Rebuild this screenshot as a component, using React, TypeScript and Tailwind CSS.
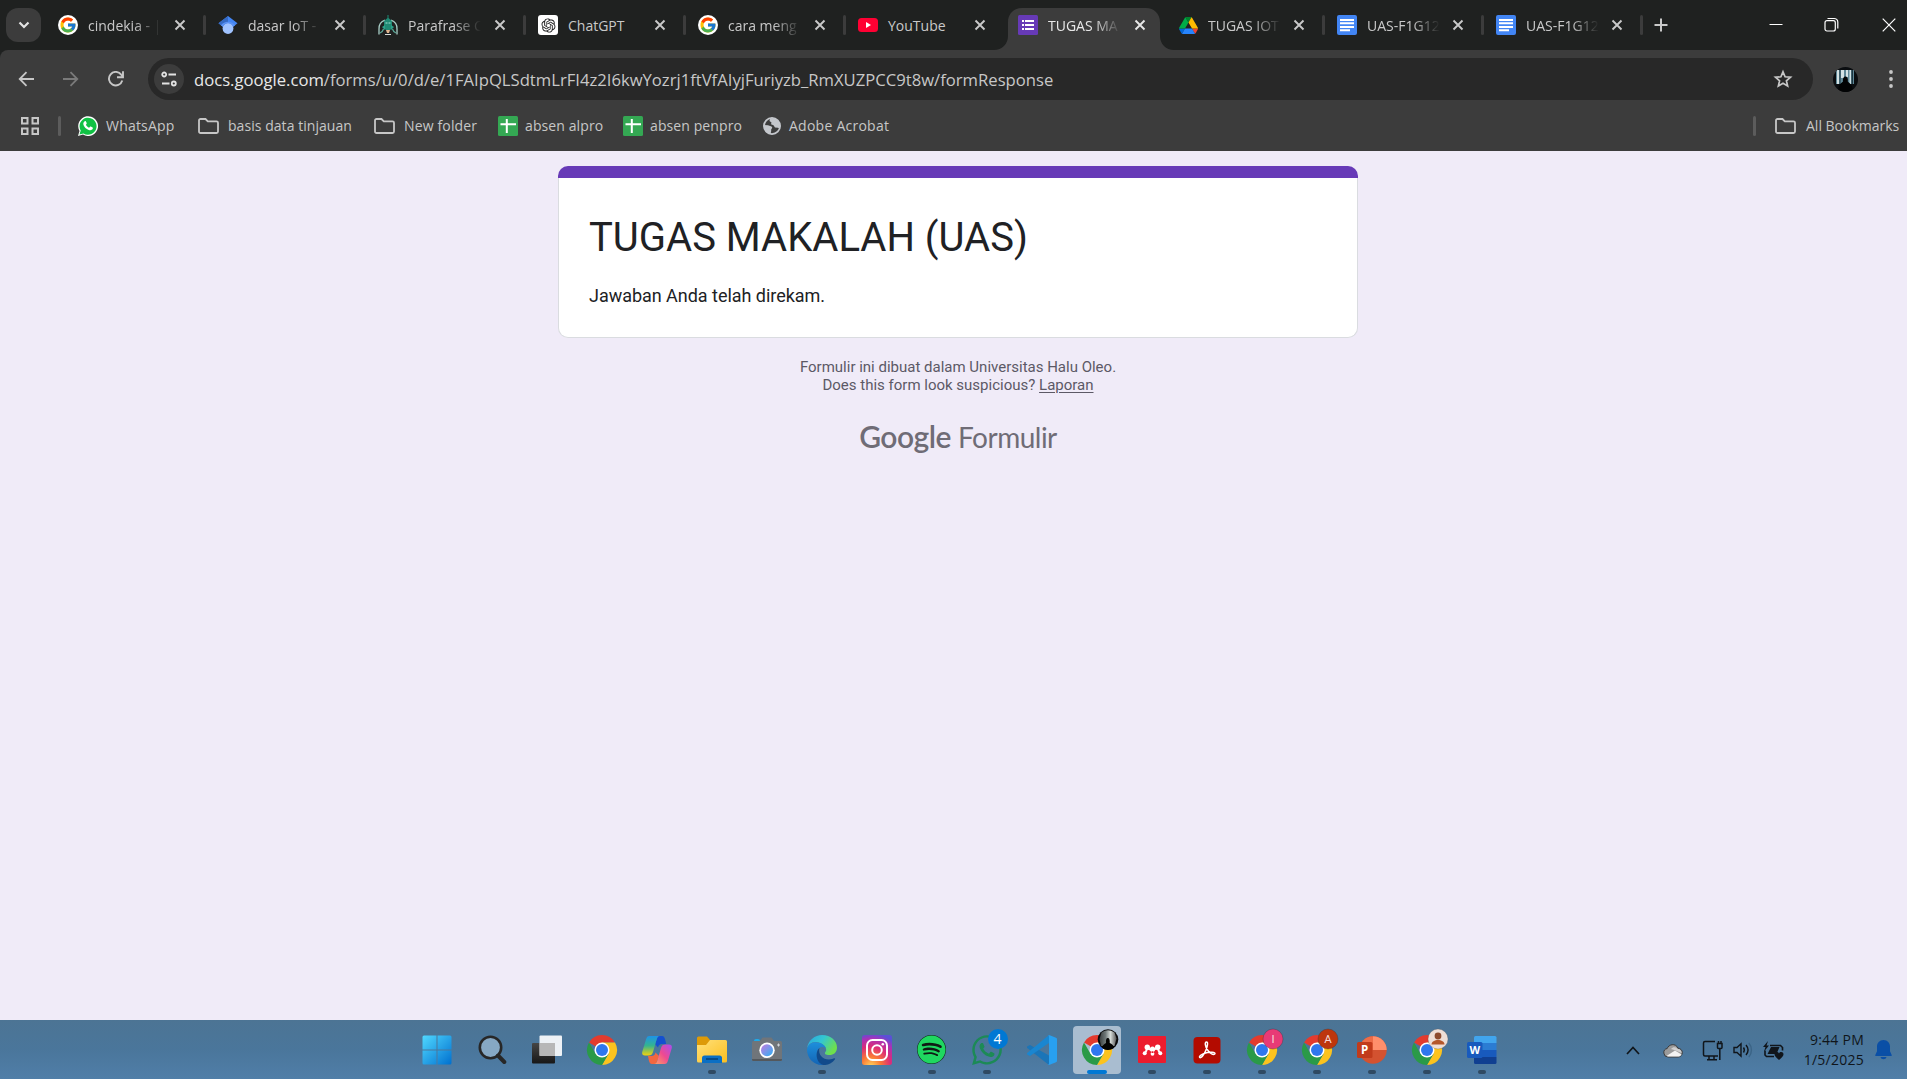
import React from "react";
import { FcGoogle } from "react-icons/fc";
import { RiOpenaiFill } from "react-icons/ri";
import { FaWhatsapp } from "react-icons/fa";
import { FaSpotify } from "react-icons/fa6";

const ui = "font-['Open_Sans','Noto_Sans',sans-serif]";

/* ---------- favicons ---------- */

const GoogleFav = () => (
  <span className="flex h-5 w-5 items-center justify-center rounded-full bg-white">
    <FcGoogle className="h-[18px] w-[18px]" />
  </span>
);

const ScholarFav = () => (
  <svg viewBox="0 0 20 20" className="h-5 w-5">
    <path d="M10 1 .5 8.200 4.500 11.500h11l4-3.300z" fill="#4285f4" />
    <path d="M10 1 .5 8.200 4.500 11.500 10 8z" fill="#356ac3" />
    <circle cx="10" cy="13.500" r="5.400" fill="#a0c3ff" />
    <path d="M4.600 11.800c2-4.600 8.800-4.600 10.800 0l1.600-1.600C14 5.500 6 5.500 3 10.200z" fill="#5b93f5" />
  </svg>
);

const ParafraseFav = () => (
  <svg viewBox="0 0 20 20" className="h-5 w-5" fill="none">
    <path d="M1 19.500V14A9 9 0 0 1 7 5.200M19 19.500V14A9 9 0 0 0 13 5.200" stroke="#a9cfc7" strokeWidth="1.300" />
    <path d="M2 18c2-1 3-2 3.500-4M18 18c-2-1-3-2-3.500-4" stroke="#5ba797" strokeWidth="1.200" />
    <path d="M6 6 9.500 3V0h1v3L14 6v6c0 2-2 3.500-4 3.500S6 14 6 12z" fill="#1f8a74" />
    <path d="M4 12l3-2v5zM16 12l-3-2v5z" fill="#2ba18a" />
    <path d="M7.500 8h2M10.500 8h2" stroke="#a6e3d5" />
    <path d="M8 15h4l-1 3H9z" fill="#e0b48e" />
    <path d="M7 19.500h6" stroke="#d4dcda" />
  </svg>
);

const ChatGptFav = () => (
  <span className="flex h-5 w-5 items-center justify-center rounded-[3px] bg-white">
    <RiOpenaiFill className="h-[17px] w-[17px] text-[#222]" />
  </span>
);

const YouTubeFav = () => (
  <svg viewBox="0 0 20 20" className="h-5 w-5">
    <rect y="3" width="20" height="14" rx="3.500" fill="#ff0033" />
    <path d="M8 7v6l5-3z" fill="#fff" />
  </svg>
);

const FormsFav = () => (
  <svg viewBox="0 0 20 20" className="h-5 w-5">
    <rect width="20" height="20" rx="1.500" fill="#673ab7" />
    <path d="M4 5h2v2H4zM7 5h9v2H7zM4 9h2v2H4zM7 9h9v2H7zM4 13h2v2H4zM7 13h9v2H7z" fill="#fff" />
  </svg>
);

const DriveFav = () => (
  <svg viewBox="0 0 87.300 78" className="h-[17px] w-[19px]">
    <path d="M6.600 66.850l3.850 6.650c.8 1.400 1.950 2.500 3.300 3.300L27.500 53H0c0 1.550.4 3.100 1.200 4.500z" fill="#0066da" />
    <path d="M43.650 25L29.900 1.200c-1.350.8-2.500 1.900-3.300 3.300L1.200 48.500C.4 49.900 0 51.450 0 53h27.500z" fill="#00ac47" />
    <path d="M73.550 76.800c1.350-.8 2.500-1.900 3.300-3.300l1.600-2.750L86.100 57.500c.8-1.400 1.200-2.950 1.200-4.500H59.800l5.850 11.500z" fill="#ea4335" />
    <path d="M43.650 25L57.400 1.200C56.050.4 54.500 0 52.900 0H34.400c-1.600 0-3.150.45-4.500 1.200z" fill="#00832d" />
    <path d="M59.800 53H27.500L13.750 76.800c1.350.8 2.900 1.200 4.500 1.200h50.800c1.600 0 3.150-.45 4.500-1.200z" fill="#2684fc" />
    <path d="M73.400 26.500L60.700 4.500c-.8-1.400-1.950-2.500-3.300-3.300L43.650 25 59.800 53h27.450c0-1.550-.4-3.100-1.200-4.500z" fill="#ffba00" />
  </svg>
);

const DocsFav = () => (
  <svg viewBox="0 0 20 20" className="h-5 w-5">
    <rect width="20" height="20" rx="2" fill="#4285f4" />
    <path d="M3 4h14v2H3zM3 7.300h14v2H3zM3 11h14v2H3zM3 14.300h10v2H3z" fill="#fff" />
  </svg>
);

const Close = ({ bright }: { bright?: boolean }) => (
  <svg viewBox="0 0 12 12" className={bright ? "h-3 w-3 text-[#e8e8e8]" : "h-3 w-3 text-[#c9c9c9]"}>
    <path d="M1.500 1.500l9 9M10.500 1.500l-9 9" stroke="currentColor" strokeWidth="1.900" />
  </svg>
);

type Tab = { title: string; icon: React.ReactNode; active?: boolean; narrow?: boolean; noSep?: boolean };

const tabs: Tab[] = [
  { title: "cindekia - |", icon: <GoogleFav /> },
  { title: "dasar IoT -", icon: <ScholarFav /> },
  { title: "Parafrase C", icon: <ParafraseFav /> },
  { title: "ChatGPT", icon: <ChatGptFav /> },
  { title: "cara meng", icon: <GoogleFav /> },
  { title: "YouTube", icon: <YouTubeFav />, noSep: true },
  { title: "TUGAS MA", icon: <FormsFav />, active: true },
  { title: "TUGAS IOT", icon: <DriveFav />, narrow: true },
  { title: "UAS-F1G12", icon: <DocsFav />, narrow: true },
  { title: "UAS-F1G12", icon: <DocsFav />, narrow: true },
];

function TabItem({ t }: { t: Tab }) {
  return (
    <div className={`relative flex h-[50px] shrink-0 pt-2 ${t.narrow ? "w-[159px]" : "w-[160px]"}`}>
      {t.active && (
        <svg viewBox="0 0 180 42" className="absolute bottom-0 left-[-14px] h-[42px] w-[180px]">
          <path d="M0 42c8 0 14-6 14-14V14C14 6 20 0 28 0h124c8 0 14 6 14 14v14c0 8 6 14 14 14z" fill="#3c3c3c" />
        </svg>
      )}
      <div className="relative flex h-[34px] w-full items-center pl-[10px]">
        <span className="flex w-5 shrink-0 justify-center">{t.icon}</span>
        <span
          className={`ml-[10px] mt-[2px] w-[73px] shrink-0 whitespace-nowrap text-[14px] leading-5 ${
            t.active ? "text-[#e8e8e8]" : "text-[#c9c9c9]"
          } ${t.title.length < 8 ? "" : "[mask-image:linear-gradient(to_right,#000_62%,transparent_100%)]"}`}
        >
          {t.title}
        </span>
        <span className={t.narrow ? "ml-[12px]" : "ml-[13px]"}>
          <Close bright={t.active} />
        </span>
      </div>
      {!t.active && !t.noSep && <span className="absolute right-[2px] top-[15px] h-5 w-[3px] rounded-full bg-[#3c3c3c]" />}
    </div>
  );
}

function TabStrip() {
  return (
    <div className="flex h-[50px] bg-[#1f2120]">
      <div className="flex w-12 shrink-0 pl-[6px] pt-2">
        <span className="flex h-[34px] w-[35px] items-center justify-center rounded-[12px] bg-[#3c3c3c]">
          <svg viewBox="0 0 12 8" className="h-2 w-3">
            <path d="M1.500 1.500 6 6l4.500-4.500" fill="none" stroke="#e3e3e3" strokeWidth="2.200" />
          </svg>
        </span>
      </div>
      {tabs.map((t, i) => (
        <TabItem key={i} t={t} />
      ))}
      <svg viewBox="0 0 14 14" className="ml-[9px] mt-[18px] h-[14px] w-[14px]">
        <path d="M7 .5v13M.5 7h13" stroke="#c9c9c9" strokeWidth="2" />
      </svg>
      <div className="ml-auto flex pt-[17px]">
        <svg viewBox="0 0 14 16" className="mr-[40px] h-4 w-[14px]">
          <path d="M.5 7.500h13" stroke="#fff" />
        </svg>
        <svg viewBox="0 0 16 16" className="mr-[43px] h-4 w-4" fill="none" stroke="#fff" strokeWidth="1.200">
          <rect x="2" y="3.700" width="10.300" height="10.300" rx="2" />
          <path d="M4.500 1.500h6.500c2 0 3.800 1.500 3.800 3.500v6.500" />
        </svg>
        <svg viewBox="0 0 14 14" className="mr-[11px] mt-[1px] h-[14px] w-[14px]">
          <path d="M.7.7l12.600 12.600M13.300.7.7 13.300" stroke="#fff" strokeWidth="1.200" />
        </svg>
      </div>
    </div>
  );
}

function Toolbar() {
  return (
    <div className="bg-[#1f2120]">
      <div className="flex h-[51px] items-start rounded-tl-[8px] bg-[#3c3c3c] pt-2">
        <div className="flex h-[42px] w-[148px] shrink-0 items-center pl-[18px]">
          <svg viewBox="0 0 16 16" className="h-4 w-4" fill="none" stroke="#c7c7c7" strokeWidth="1.800">
            <path d="M16 8H2M8.500 1.200 1.700 8l6.800 6.800" />
          </svg>
          <svg viewBox="0 0 16 16" className="ml-[29px] h-4 w-4" fill="none" stroke="#7a7a7a" strokeWidth="1.800">
            <path d="M0 8h14M7.500 1.200 14.300 8l-6.800 6.800" />
          </svg>
          <svg viewBox="0 0 16 16" className="ml-[29px] h-4 w-4" fill="none" stroke="#c7c7c7" strokeWidth="1.900">
            <path d="M14.300 9.600A6.800 6.800 0 1 1 13.200 3.600L14.800 5.500M15 .3v5.900H9" />
          </svg>
        </div>
        <div className="flex h-[42px] w-[1665px] shrink-0 items-center rounded-full bg-[#282828] pl-[6px] pr-[20px]">
          <span className="flex h-[30px] w-[30px] shrink-0 items-center justify-center rounded-full bg-[#3c3c3c]">
            <svg viewBox="0 0 16 16" className="h-4 w-4" fill="none" stroke="#e3e3e3" strokeWidth="1.800">
              <circle cx="3.200" cy="3.500" r="2" />
              <path d="M7.500 3.500H15M1 12.500h7.500" />
              <circle cx="12.800" cy="12.500" r="2" />
            </svg>
          </span>
          <span className="ml-[10px] mt-[2px] whitespace-nowrap text-[16.650px] leading-6 text-[#c7c7c7]">
            <span className="text-[#e8e8e8]">docs.google.com</span>
            /forms/u/0/d/e/1FAIpQLSdtmLrFI4z2I6kwYozrj1ftVfAIyjFuriyzb_RmXUZPCC9t8w/formResponse
          </span>
          <svg viewBox="0 0 20 20" className="ml-auto h-5 w-5" fill="none" stroke="#c7c7c7" strokeWidth="1.700">
            <path d="M10 2.800l2.100 5 5.400.45-4.100 3.550 1.250 5.300L10 14.300l-4.650 2.800 1.250-5.300L2.500 8.250l5.400-.45z" />
          </svg>
        </div>
        <div className="flex h-[42px] grow items-center pl-[20px]">
          <svg viewBox="0 0 25 25" className="h-[25px] w-[25px]">
            <clipPath id="avatar">
              <circle cx="12.500" cy="12.500" r="12.500" />
            </clipPath>
            <g clipPath="url(#avatar)">
              <rect width="25" height="25" fill="#0a0d10" />
              <path d="M3 3h18v14H3z" fill="#5f8796" />
              <path d="M4 3h2v14H4zM8 3h3v8H8zM13 3h2v7h-2zM16.500 3H18v14h-1.500z" fill="#d3e2e4" />
              <path d="M6.500 3H7.500v14h-1zM18.500 3H20v14h-1.500z" fill="#1c3540" />
              <path d="M5 25c0-6 2-8 5-10.500C9.500 11 11 9.500 12.500 9.500s2.800 1.500 2.300 5C17.500 17 20 19 20 25z" fill="#020304" />
            </g>
          </svg>
          <svg viewBox="0 0 4 18" className="ml-[31px] h-[18px] w-1" fill="#c7c7c7">
            <circle cx="2" cy="2" r="1.900" />
            <circle cx="2" cy="9" r="1.900" />
            <circle cx="2" cy="16" r="1.900" />
          </svg>
        </div>
      </div>
    </div>
  );
}

const Folder = () => (
  <svg viewBox="0 0 21 16" className="h-4 w-[21px]" fill="none" stroke="#c7c7c7" strokeWidth="1.800">
    <path d="M1 13.500v-11C1 1.700 1.700 1 2.500 1h5l2.300 2.300h8.700c.8 0 1.500.7 1.500 1.500v8.700c0 .8-.7 1.500-1.500 1.500h-16C1.700 15 1 14.300 1 13.500z" />
  </svg>
);

const Sheet = () => (
  <svg viewBox="0 0 20 20" className="h-5 w-5">
    <rect width="20" height="20" rx="1.500" fill="#34a853" />
    <path d="M7.800 3h2v14h-2zM2.500 7.300h15.500v2H2.500z" fill="#fff" />
  </svg>
);

const Globe = () => (
  <svg viewBox="0 0 18 18" className="h-[18px] w-[18px]">
    <circle cx="9" cy="9" r="8.100" fill="none" stroke="#c4c7cc" strokeWidth="1.800" />
    <path d="M1 8l4 .3 3.500 1.200c1.200.8.8 2-.2 2.500L8 15.500 6.500 17C3 16 1 13 1 9zM7 1.200 6.500 4l2 1.500L8 7.300l2.500 1L12 10.500l3 .2 1.800 1C18 6 15 2 10.500 1z" fill="#c4c7cc" />
  </svg>
);

const WhatsAppFav = () => (
  <svg viewBox="0 0 20 20" className="h-5 w-5">
    <path d="M0 20l1.500-5A9.900 9.900 0 1 1 5 18.600z" fill="#fff" />
    <path d="M1.500 18.500l1.200-4A8.500 8.500 0 1 1 5.500 17.400z" fill="#10c144" />
    <path d="M6.700 5.200c.4-.3 1-.2 1.200.2l.8 1.700c.1.300 0 .6-.2.900l-.6.800c.7 1.400 1.800 2.400 3.200 3l.9-1c.2-.3.500-.3.800-.2l1.800.9c.4.300.3.900.1 1.300-.8 1.500-2.300 1.700-4 1.100-2.600-1-4.400-2.700-5.200-5-.5-1.500.1-3 1.200-3.700z" fill="#fff" />
  </svg>
);

function Bookmark({ icon, label, className, gap }: { icon: React.ReactNode; label: string; className: string; gap: string }) {
  return (
    <div className={`flex shrink-0 items-center ${className}`}>
      {icon}
      <span className={`whitespace-nowrap text-[14px] leading-5 text-[#c7c7c7] ${gap}`}>{label}</span>
    </div>
  );
}

function BookmarksBar() {
  return (
    <div className="flex h-[50px] items-center bg-[#3c3c3c] pl-[21px] pr-[5px]">
      <svg viewBox="0 0 18 18" className="h-[18px] w-[18px]" fill="none" stroke="#c7c7c7" strokeWidth="2">
        <path d="M1 1h5.500v5.500H1zM11.500 1H17v5.500h-5.500zM1 11.500h5.500V17H1zM11.500 11.500H17V17h-5.500z" />
      </svg>
      <span className="ml-[19px] mr-[17px] h-5 w-[3px] rounded-full bg-[#5c5c5c]" />
      <Bookmark icon={<WhatsAppFav />} label="WhatsApp" className="w-[120px]" gap="ml-[8px] tracking-[0.2px]" />
      <Bookmark icon={<Folder />} label="basis data tinjauan" className="w-[176px]" gap="ml-[9px] tracking-[0.05px]" />
      <Bookmark icon={<Folder />} label="New folder" className="w-[124px]" gap="ml-[9px] tracking-[0.15px]" />
      <Bookmark icon={<Sheet />} label="absen alpro" className="w-[125px]" gap="ml-[7px] tracking-[0.1px]" />
      <Bookmark icon={<Sheet />} label="absen penpro" className="w-[140px]" gap="ml-[7px] tracking-[0.1px]" />
      <Bookmark icon={<Globe />} label="Adobe Acrobat" className="w-[140px]" gap="ml-[8px] tracking-[0.25px]" />
      <span className="ml-auto h-5 w-[3px] shrink-0 rounded-full bg-[#5c5c5c]" />
      <Bookmark icon={<Folder />} label="All Bookmarks" className="ml-[19px] w-[127px]" gap="ml-[10px]" />
    </div>
  );
}

/* ---------- form page ---------- */

function FormPage() {
  return (
    <main className="flex h-[869px] flex-col items-center bg-[#f0ebf8] pl-[9px] pt-[15px] font-[Roboto,sans-serif]">
      <section className="h-[172px] w-[800px]">
        <div className="h-[12px] rounded-t-[10px] bg-[#673ab7]" />
        <div className="h-[160px] rounded-b-[10px] border border-t-0 border-[#dadce0] bg-white pl-[30px] pt-[35px]">
          <h1 className="text-[40px] leading-[50px] text-[#202124]">TUGAS MAKALAH (UAS)</h1>
          <p className="mt-[20px] text-[18px] leading-[25px] tracking-[-0.03px] text-[#202124]">Jawaban Anda telah direkam.</p>
        </div>
      </section>
      <div className="mt-[20px] text-center text-[15px] leading-[18px] text-[#5c5966]">
        <p>Formulir ini dibuat dalam Universitas Halu Oleo.</p>
        <p>
          Does this form look suspicious? <a className="underline underline-offset-2">Laporan</a>
        </p>
      </div>
      <div className="mt-[22px] flex items-baseline gap-[7px] font-[Lato,sans-serif] leading-[40px] text-[#6f6c76]">
        <span className="text-[30px] font-semibold tracking-[-0.5px]">Google</span>
        <span className="text-[28px] tracking-[-0.5px]">Formulir</span>
      </div>
    </main>
  );
}

/* ---------- taskbar ---------- */

const Chrome = ({ children }: { children?: React.ReactNode }) => (
  <svg viewBox="0 0 30 30" className="h-[30px] w-[30px] overflow-visible">
    <path d="M15 15 2 7.500A15 15 0 0 1 28 7.500H15z" fill="#e33b2e" />
    <path d="M15 7.500h13A15 15 0 0 1 15 30l6.500-11.250z" fill="#fcc31e" />
    <path d="M21.500 18.750 15 30A15 15 0 0 1 2 7.500l6.500 11.250z" fill="#2a9a48" />
    <circle cx="15" cy="15" r="7.500" fill="#fff" />
    <circle cx="15" cy="15" r="6" fill="#2f77ee" />
    {children}
  </svg>
);

const Badge = ({ letter, fill }: { letter: string; fill: string }) => (
  <>
    <circle cx="26" cy="4" r="10" fill={fill} stroke="#33333366" strokeWidth=".8" />
    <text x="26" y="8" textAnchor="middle" fontSize="11.500" fontFamily="Roboto" fill="#f5d8d8">
      {letter}
    </text>
  </>
);

const Start = () => (
  <svg viewBox="0 0 30 30" className="h-[30px] w-[30px]">
    <linearGradient id="win" x1="0" y1="0" x2="1" y2="1">
      <stop stopColor="#50d8ff" />
      <stop offset="1" stopColor="#0070cf" />
    </linearGradient>
    <path d="M2 .5h12.500v14H.5V2Q.5.5 2 .5zM15.500.5H28q1.500 0 1.500 1.500v12.500h-14zM.5 15.500h14v14H2Q.5 29.500.5 28zM15.500 15.500h14V28q0 1.500-1.500 1.500H15.500z" fill="url(#win)" />
  </svg>
);

const Search = () => (
  <svg viewBox="0 0 30 30" className="h-[30px] w-[30px]">
    <circle cx="13.500" cy="12.500" r="10.700" fill="#86a8c4" stroke="#272727" strokeWidth="2.600" />
    <path d="m21 20.500 6.300 6.500" stroke="#272727" strokeWidth="4" strokeLinecap="round" />
  </svg>
);

const TaskView = () => (
  <svg viewBox="0 0 30 30" className="h-[30px] w-[30px]">
    <linearGradient id="tv" x2="0" y2="1">
      <stop stopColor="#454545" />
      <stop offset="1" stopColor="#171717" />
    </linearGradient>
    <rect y="8" width="23" height="20.500" rx="1" fill="url(#tv)" />
    <rect x="7.500" y=".5" width="22.500" height="20.500" rx="1" fill="#fff" opacity=".9" />
    <path d="M7.500 8H23v13H7.500z" fill="#aaa" opacity=".8" />
  </svg>
);

const Copilot = () => (
  <svg viewBox="0 0 30 30" className="h-[30px] w-[30px]">
    <linearGradient id="cp1" x2="0" y2="1">
      <stop stopColor="#1d93e8" />
      <stop offset=".5" stopColor="#35b58e" />
      <stop offset="1" stopColor="#f2d20c" />
    </linearGradient>
    <linearGradient id="cp2" x1="1" y1="0" x2="0" y2="1">
      <stop stopColor="#a94df0" />
      <stop offset=".5" stopColor="#ee4a91" />
      <stop offset="1" stopColor="#ffa260" />
    </linearGradient>
    <path d="M16 1h4c2 0 2.500 1.500 3 3l1.200 5H20c-2.500 0-3.500 1.500-4 3.500L13 9z" fill="#1450cf" />
    <path d="M14 29h-4c-2 0-2.500-1.500-3-3l-1-5h3.500c2.500 0 3.500-1.500 4-3.500L17 21z" fill="#f2673f" />
    <path d="M7.500 1H18c-2 0-2.800 1.500-3.500 4L11 17c-.7 2.500-2 3.500-4.500 3.500H3C0 20.500-.3 18.500.5 16L4 4.500C4.700 2 5.500 1 7.500 1z" fill="url(#cp1)" />
    <path d="M22.500 29H12c2 0 2.800-1.500 3.500-4L19 13c.7-2.500 2-3.500 4.500-3.500H27c3 0 3.300 2 2.500 4.500L26 25.500c-.7 2.500-1.500 3.500-3.500 3.500z" fill="url(#cp2)" />
  </svg>
);

const Explorer = () => (
  <svg viewBox="0 0 30 30" className="h-[30px] w-[30px]">
    <linearGradient id="fe" x1="0" y1="0" x2="1" y2="1">
      <stop stopColor="#ffe07a" />
      <stop offset="1" stopColor="#fcbf1f" />
    </linearGradient>
    <path d="M0 3q0-1.500 1.500-1.500H10L13 5h5v5H0z" fill="#dd9a08" />
    <path d="M0 10h9l4-5h15.500Q30 5 30 6.500V26q0 1.500-1.500 1.500h-27Q0 27.500 0 26z" fill="url(#fe)" />
    <path d="M5 28v-5q0-2.500 2.500-2.500h15Q25 20.500 25 23v5z" fill="#0b6fc4" />
    <path d="M9 24h12" stroke="#053f78" strokeWidth="1.500" />
  </svg>
);

const Camera = () => (
  <svg viewBox="0 0 30 30" className="h-[30px] w-[30px]">
    <linearGradient id="lens" x1="0" y1="0" x2="1" y2="1">
      <stop stopColor="#c57be0" />
      <stop offset="1" stopColor="#2bb0f3" />
    </linearGradient>
    <path d="M2 6q0-2 2-2h2q2 0 2 2z" fill="#1fa9e8" />
    <path d="M0 7.500Q0 6 1.500 6H8l2.500-3.500h9L22 6h6.500Q30 6 30 7.500v17q0 1.500-1.500 1.500h-27Q0 26 0 24.500z" fill="#70757a" />
    <path d="M0 24h30v.5q0 1.500-1.500 1.500h-27Q0 26 0 24.500z" fill="#54585c" />
    <circle cx="15" cy="15.300" r="7.700" fill="#fff" />
    <circle cx="15" cy="15.300" r="6" fill="url(#lens)" />
    <path d="M26.500 8.500v3M25 10h3" stroke="#d0d5da" />
  </svg>
);

const Edge = () => (
  <svg viewBox="0 0 30 30" className="h-[30px] w-[30px]">
    <linearGradient id="eg1" x2="1" y2=".5">
      <stop stopColor="#2aa5e0" />
      <stop offset=".5" stopColor="#33c6d2" />
      <stop offset="1" stopColor="#6ee04d" />
    </linearGradient>
    <linearGradient id="eg2" x2="0" y2="1">
      <stop stopColor="#1d8fdc" />
      <stop offset="1" stopColor="#1464b4" />
    </linearGradient>
    <path d="M0 14C1 5 8 0 15 0c9 0 15 6 15 12.500 0 5-3.500 7.500-7.500 7.500-4 0-5.500-1.300-4-3.300.8-1 .8-2 .5-3C18 10 13 7 8.500 7 4 7 1 10 0 14z" fill="url(#eg1)" />
    <path d="M0 14.500C1 9.500 4.500 7.300 8.500 7.300c5 0 9.800 2.900 10.500 6.200-2-2-5-2-7-.2-4 3.700-2.500 12.200 4.500 15.700l-1.500 1C6.500 30 0 23 0 14.500z" fill="url(#eg2)" />
    <path d="M12.500 13c-1.500 5 1.500 11.500 9.500 11.500 2.500 0 4.300-.8 5.200-1.200.7-.3 1.200.3.800 1C25.500 28 21 30.300 16.500 30 9 28 7.500 17 12.500 13z" fill="#114a8b" />
  </svg>
);

const Instagram = () => (
  <svg viewBox="0 0 30 30" className="h-[30px] w-[30px]">
    <radialGradient id="ig" cx=".3" cy="1.050" r="1.100">
      <stop stopColor="#ffd75e" />
      <stop offset=".3" stopColor="#fb7a35" />
      <stop offset=".6" stopColor="#dc2c77" />
      <stop offset=".85" stopColor="#a832b8" />
      <stop offset="1" stopColor="#5b50d6" />
    </radialGradient>
    <rect width="30" height="30" rx="2.500" fill="url(#ig)" />
    <rect x="5" y="5" width="20" height="20" rx="5.500" fill="none" stroke="#fff" strokeWidth="2" />
    <circle cx="15" cy="15" r="4.800" fill="none" stroke="#fff" strokeWidth="2" />
    <circle cx="20.800" cy="9.200" r="1.300" fill="#fff" />
  </svg>
);

const Spotify = () => (
  <span className="flex h-[29px] w-[29px] rounded-full bg-[#101a14]">
    <FaSpotify className="h-[29px] w-[29px] text-[#1fd760]" />
  </span>
);

const WhatsAppTask = () => (
  <span className="relative flex h-[32px] w-[32px] items-center justify-center">
    <FaWhatsapp className="h-[34px] w-[34px] shrink-0 text-[#1c8a56]" />
    <span className="absolute left-[17px] top-[-5px] flex h-5 w-5 items-center justify-center rounded-full bg-[#0078d4] text-[14px] text-white">4</span>
  </span>
);

const VsCode = () => (
  <svg viewBox="0 0 30 30" className="h-[30px] w-[30px]">
    <path d="M3 10 .5 11.300c-.7.600-.7 1.400 0 2L22 30v-9.500z" fill="#1b75b8" />
    <path d="M.5 17.800c-.7.600-.7 1.300 0 1.900L3 21l19-13V0z" fill="#1a86d0" />
    <path d="M21 .8C21.500.2 22 0 22.700.2l6.300 2.600c.6.300 1 .8 1 1.500v21.400c0 .7-.4 1.200-1 1.500l-6.300 2.600c-.7.200-1.200 0-1.700-.6.600.3 1-.2 1-1V1.800c0-.8-.4-1.300-1-1z" fill="#28a0f0" />
  </svg>
);

const Mendeley = () => (
  <svg viewBox="0 0 28 27" className="h-[27px] w-[28px]">
    <rect width="28" height="27" rx="1" fill="#ec1c2e" />
    <g fill="#fff">
      <circle cx="9.300" cy="11.300" r="2.700" />
      <circle cx="19.700" cy="11.300" r="2.700" />
      <circle cx="14.500" cy="13.200" r="2.600" />
      <circle cx="6.700" cy="17.300" r="2" />
      <circle cx="14.500" cy="17.800" r="1.900" />
      <circle cx="22.300" cy="17.300" r="2" />
    </g>
    <path d="M9 11.500c0 3-.8 4-2 5.500M20 11.500c0 3 .8 4 2 5.500M9.500 11.500c1.500 2.500 3 2.500 5 2s3.500 0 5-2" fill="none" stroke="#fff" strokeWidth="2" />
    <circle cx="14.500" cy="16.200" r=".9" fill="#ec1c2e" />
  </svg>
);

const Acrobat = () => (
  <svg viewBox="0 0 28 28" className="h-[28px] w-[28px]">
    <rect x=".5" y="1" width="27" height="26.500" rx="4" fill="#b30b00" />
    <path d="M13.500 6c-2 0-1.500 4 1.200 8.200 2.400 3.700 5.700 5 7 3.800 1.700-1.800-5.200-2.600-10-.8-4 1.500-5.800 3.300-5 4.200 1.300 1.200 4.300-2.700 6.200-7.200C14.700 9.700 15.200 6 13.500 6z" fill="none" stroke="#fff" strokeWidth="1.500" />
  </svg>
);

const PowerPoint = () => (
  <svg viewBox="0 0 30 30" className="h-[30px] w-[30px]">
    <circle cx="16" cy="15" r="13.700" fill="#d35230" />
    <path d="M16 1.300A13.700 13.700 0 0 0 2.300 15H16z" fill="#ed6c47" />
    <path d="M16 1.300A13.700 13.700 0 0 1 29.700 15H16z" fill="#ff8f6b" />
    <rect y="7" width="15.500" height="16" rx="1.500" fill="#c13b1b" />
    <text x="7.500" y="19" textAnchor="middle" fontSize="11.500" fontWeight="700" fontFamily="Open Sans" fill="#fff">
      P
    </text>
  </svg>
);

const Word = () => (
  <svg viewBox="0 0 30 30" className="h-[30px] w-[30px]">
    <path d="M7 2.500Q7 1 8.500 1H28q1.500 0 1.500 1.500V8H7z" fill="#41a5ee" />
    <path d="M7 8h22.500v7H7z" fill="#2b7cd3" />
    <path d="M7 15h22.500v7H7z" fill="#185abd" />
    <path d="M7 22h22.500v5.500Q29.500 29 28 29H8.500Q7 29 7 27.500z" fill="#103f91" />
    <rect y="7" width="15.500" height="16" rx="1.500" fill="#185abd" />
    <text x="7.700" y="19" textAnchor="middle" fontSize="11" fontWeight="700" fontFamily="Open Sans" fill="#fff">
      W
    </text>
  </svg>
);

const PhotoBadge = () => (
  <>
    <linearGradient id="pb" x2="1">
      <stop stopColor="#3a3f40" />
      <stop offset=".35" stopColor="#6f7878" />
      <stop offset=".65" stopColor="#d5dbd8" />
      <stop offset="1" stopColor="#555" />
    </linearGradient>
    <circle cx="26" cy="4.500" r="10.300" fill="#0a0a0b" />
    <path d="M19.500-2.500q6.500-4.500 13 0l2 6-2 7.500H19l-1.500-7z" fill="url(#pb)" />
    <path d="M20 13c.5-3 2.500-4 4-5-.3-3 .2-5 1.800-5s2.200 2 1.900 5c2 1 4 2 4.300 5-4 2.500-8.500 2.500-12 0z" fill="#030303" />
  </>
);

const PersonBadge = () => (
  <>
    <circle cx="26" cy="4" r="10" fill="#eeded6" stroke="#5555" strokeWidth=".8" />
    <circle cx="26" cy="1" r="3.400" fill="#8d4a2d" />
    <path d="M19.500 9.500c0-6 13-6 13 0z" fill="#b5572a" />
  </>
);

type App = { icon: React.ReactNode; state?: "running" | "active" };

const apps: App[] = [
  { icon: <Start /> },
  { icon: <Search /> },
  { icon: <TaskView /> },
  { icon: <Chrome /> },
  { icon: <Copilot /> },
  { icon: <Explorer />, state: "running" },
  { icon: <Camera /> },
  { icon: <Edge />, state: "running" },
  { icon: <Instagram /> },
  { icon: <Spotify />, state: "running" },
  { icon: <WhatsAppTask />, state: "running" },
  { icon: <VsCode /> },
  { icon: <Chrome><PhotoBadge /></Chrome>, state: "active" },
  { icon: <Mendeley />, state: "running" },
  { icon: <Acrobat />, state: "running" },
  { icon: <Chrome><Badge letter="I" fill="#e83a76" /></Chrome>, state: "running" },
  { icon: <Chrome><Badge letter="A" fill="#bd360d" /></Chrome>, state: "running" },
  { icon: <PowerPoint />, state: "running" },
  { icon: <Chrome><PersonBadge /></Chrome>, state: "running" },
  { icon: <Word />, state: "running" },
];

function Tray() {
  return (
    <div className="ml-auto flex h-[60px] items-center pr-[15px] text-[#10151a]">
      <svg viewBox="0 0 14 9" className="mr-[23px] h-[9px] w-[14px]">
        <path d="M1 8l6-6.500L13 8" fill="none" stroke="currentColor" strokeWidth="1.700" />
      </svg>
      <svg viewBox="0 0 20 15" className="mr-[19px] h-[15px] w-5">
        <path d="M5 14a4.300 4.300 0 0 1-.8-8.500C5.500 1.500 12.500-.5 15 5.200c2.500.3 4.300 2 4.300 4.300S17.500 14 15.300 14z" fill="#9b9b9b" stroke="#3b3b3b" strokeWidth="1" />
        <path d="M3.500 13 12 7.500l6.500 4c-.8 1.500-2 2-3.200 2H5z" fill="#f2f2f2" />
        <path d="M8 6c2-2.500 5-2 6.500 0 2 0 4.300 1.500 4 4L12 7.300z" fill="#d0d0d0" />
      </svg>
      <svg viewBox="0 0 22 21" className="mr-[9px] h-[21px] w-[22px]" fill="none" stroke="currentColor" strokeWidth="1.500">
        <path d="M13 1.500H3Q1.500 1.500 1.500 3v11.500Q1.500 16 3 16h13M7 16v3.500M12 16v3.500M5 19.800h10" />
        <path d="M15.500 3.500h4.500v4q0 1-1 1h-2.500q-1 0-1-1zM16.500 3V1M19 3V1M17.800 8.500V20" />
      </svg>
      <svg viewBox="0 0 20 16" className="mr-[10px] h-4 w-5" fill="none" stroke="currentColor" strokeWidth="1.400">
        <path d="M1 5.500h3L8 1.800v12.400L4 10.500H1zM10.500 5.500c1 1.500 1 3.500 0 5M13 3c2.500 3 2.500 7 0 10" />
        <path d="M15.800 1c3.500 4 3.500 10 0 14" stroke="#3b6486" />
      </svg>
      <svg viewBox="0 0 21 19" className="mr-[20px] h-[19px] w-[21px]">
        <path d="M7 4.500h10.500l2 2v3M2 9.500v4.500l1.500 1.500H11" fill="none" stroke="currentColor" strokeWidth="1.600" />
        <path d="M8 6h8.500l-3 7H4.500zM5 0 0 6h2.500L1 10.500 6 4.500H3.500zM16 19c-3-2.500-4.500-4-4.500-5.700 0-2.500 3.500-3 4.500-.8 1-2.200 4.500-1.700 4.500.8C20.500 15 19 16.500 16 19z" fill="currentColor" />
      </svg>
      <div className="mr-[11px] text-right text-[14px] leading-5 tracking-[0.250px]">
        <p>9:44 PM</p>
        <p>1/5/2025</p>
      </div>
      <svg viewBox="0 0 17 20" className="h-5 w-[17px]" fill="#0a4fa6">
        <path d="M8.500 0C4.500 0 2 3 2 6.500v4.700L.3 15c-.2.600.1 1 .7 1h15c.6 0 .9-.4.7-1L15 11.200V6.500C15 3 12.500 0 8.500 0zM5.500 17c.5 1.500 1.500 2.200 3 2.200s2.500-.7 3-2.200z" />
      </svg>
    </div>
  );
}

function Taskbar() {
  return (
    <footer className="flex h-[59px] bg-linear-to-b from-[#4c7494] via-[#4a769b] to-[#507ea8] pl-[409px]">
      {apps.map((a, i) => (
        <div key={i} className="relative flex h-[59px] w-[55px] shrink-0 items-center justify-center">
          {a.state === "active" && <span className="absolute left-[4px] top-[6px] h-12 w-12 rounded-[4px] bg-[#a9bdd0]" />}
          <span className="relative flex">{a.icon}</span>
          {a.state === "running" && <span className="absolute bottom-[5px] left-[24px] h-1 w-2 rounded-full bg-[#2f4a63]" />}
          {a.state === "active" && <span className="absolute bottom-[5px] left-[18px] h-1 w-5 rounded-full bg-[#0078d4]" />}
        </div>
      ))}
      <Tray />
    </footer>
  );
}

export default function App() {
  return (
    <div className={`h-[1079px] w-[1907px] overflow-hidden ${ui}`}>
      <TabStrip />
      <Toolbar />
      <BookmarksBar />
      <FormPage />
      <Taskbar />
    </div>
  );
}
